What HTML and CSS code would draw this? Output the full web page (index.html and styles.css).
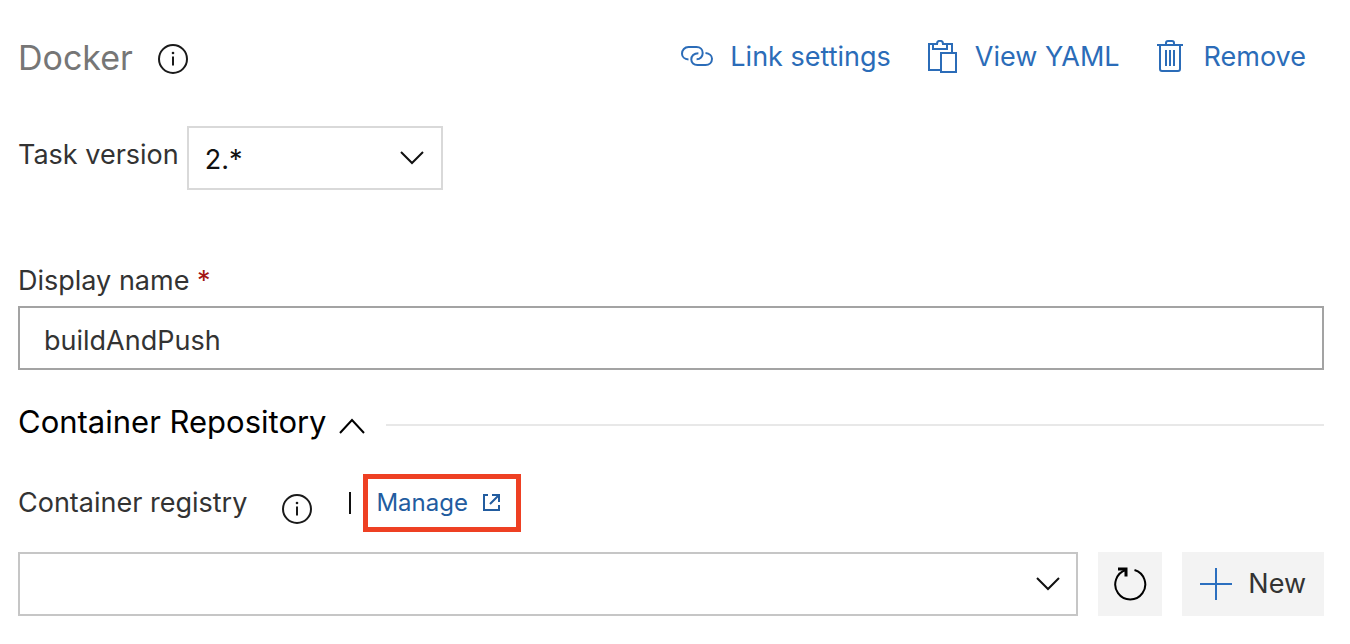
FILE: index.html
```html
<!DOCTYPE html>
<html lang="en">
<head>
<meta charset="utf-8">
<title>Docker task</title>
<link rel="stylesheet" href="styles.css">
</head>
<body>
<main class="panel">
  <header class="header">
    <h1 class="title">Docker</h1>
    <button class="info" type="button" aria-label="About Docker">
      <svg width="32" height="32" viewBox="0 0 32 32"><circle cx="16" cy="16" r="14"/><path d="M16 13.500V22.500"/><circle class="dot" cx="16" cy="10" r="1.300"/></svg>
    </button>
    <nav class="actions">
      <a class="action" href="#link"><svg width="34" height="24" viewBox="0 3 34 24"><path d="M8.500 17.500C4.500 17.200 2 14.700 2 11.700C2 8 4.700 5 8.500 5H16.500C20.200 5 22.700 7.600 22.700 11C22.700 14.500 20.200 17.300 16.600 17.300"/><path d="M25.500 11C29.500 11.300 32 13.800 32 16.800C32 20.500 29.300 23 25.500 23H17.500C13.800 23 11.300 20.900 11.300 17.500C11.300 14 13.800 11.200 18.400 11.200"/></svg>Link settings</a>
      <a class="action" href="#yaml"><svg width="32" height="34" viewBox="0 1 32 34"><path d="M14 31H2V5H6M20 5H25V13M6 5H10C10 0.800 16 0.800 16 5H20V10H6ZM14 14H29V33H14Z"/></svg>View YAML</a>
      <a class="action action-remove" href="#remove"><svg width="28" height="34" viewBox="0 1 28 34"><path d="M1 6H27M4 6V30Q4 32 6 32H22Q24 32 24 30V6M10 6V4Q10 2 12 2H16Q18 2 18 4V6M10 11V27M14 11V27M18 11V27"/></svg>Remove</a>
    </nav>
  </header>

  <div class="version">
    <label class="label" for="version">Task version</label>
    <div class="select version-select">
      <select id="version"><option>2.*</option></select>
      <svg class="chevron" width="26" height="16" viewBox="0 0 26 16"><path d="M2 2L13 13L24 2"/></svg>
    </div>
  </div>

  <div class="field">
    <label class="label" for="name">Display name <span class="required">*</span></label>
    <input class="text" id="name" type="text" value="buildAndPush">
  </div>

  <section>
    <h2 class="section-title">
      <button class="toggle" type="button" aria-expanded="true">Container Repository
        <svg width="28" height="18" viewBox="0 0 28 18"><path d="M2 16L14 3L26 16"/></svg>
      </button>
    </h2>
    <div class="registry-head">
      <label class="label" for="registry">Container registry</label>
      <button class="info" type="button" aria-label="About container registry">
        <svg width="32" height="32" viewBox="0 0 32 32"><circle cx="16" cy="16" r="14"/><path d="M16 13.500V22.500"/><circle class="dot" cx="16" cy="10" r="1.300"/></svg>
      </button>
      <span class="divider"></span>
      <a class="manage" href="#manage">Manage<svg width="20" height="20" viewBox="0 0 20 20"><path d="M6 2H2V17H17V12M10 2H17V9M17 2L8 11"/></svg></a>
    </div>
    <div class="registry-row">
      <div class="select registry-select">
        <select id="registry"><option></option></select>
        <svg class="chevron" width="26" height="16" viewBox="0 0 26 16"><path d="M2 2L13 13L24 2"/></svg>
      </div>
      <button class="button refresh" type="button" aria-label="Refresh">
        <svg width="36" height="36" viewBox="0 0 36 36"><path d="M22.500 4A15 15 0 1 1 14 4"/><path class="arrow" d="M6 3H14V10.500"/></svg>
      </button>
      <button class="button new" type="button">
        <svg width="32" height="32" viewBox="0 0 32 32"><path d="M16 0V32M0 16H32"/></svg>New
      </button>
    </div>
  </section>
</main>
</body>
</html>
```
FILE: styles.css
```css
* { box-sizing: border-box; }
body {
  margin: 0;
  background: #fff;
  color: #333;
  font: 27px/36px Inter, "Liberation Sans", sans-serif;
}
button, input, select { font: inherit; color: inherit; }
button { border: 0; padding: 0; background: none; }
svg { flex: none; fill: none; stroke: currentColor; stroke-width: 2; }
a { color: #2b6cb8; text-decoration: none; }

.panel { padding: 26px 26px 28px 18px; }
.header { display: flex; align-items: center; height: 64px; margin-bottom: 36px; }
.title { margin: 0; font-size: 34px; font-weight: 400; color: #767676; }
.info { display: flex; color: #1a1a1a; }
.header .info { margin-left: 24px; padding-top: 2px; }
.dot { fill: currentColor; stroke: none; }
.actions { display: flex; gap: 36px; margin-left: auto; padding: 0 18px 3px 0; }
.action { display: flex; align-items: center; gap: 16px; }
.action-remove { gap: 20px; }

.version { display: flex; align-items: center; gap: 8px; }
.select { position: relative; }
.select select {
  width: 100%;
  height: 64px;
  padding: 4px 16px 0;
  border: 2px solid #d9d9d9;
  border-radius: 0;
  background: #fff;
  appearance: none;
}
.version .label { padding-bottom: 6px; }
.version-select { width: 256px; color: #111; }
.chevron {
  position: absolute;
  top: 24px;
  right: 18px;
  color: #111;
  pointer-events: none;
}

.field { display: grid; gap: 7px; margin-top: 73px; }
.required { color: #a31515; }
.text {
  width: 100%;
  height: 64px;
  padding: 4px 24px 0;
  border: 2px solid #a3a3a3;
  border-radius: 0;
}

.section-title {
  display: flex;
  align-items: center;
  gap: 20px;
  margin: 32px 0;
  font-size: 31px;
  line-height: 40px;
  font-weight: 400;
  color: #000;
}
.section-title::after { content: ""; flex: 1; height: 2px; margin-top: 6px; background: #e8e8e8; }
.toggle { display: flex; align-items: center; gap: 11px; }
.toggle svg { margin-top: 8px; }

.registry-head { display: flex; align-items: center; margin-bottom: 20px; }
.registry-head .info { margin-left: 34px; padding-top: 12px; }
.divider { width: 2px; height: 22px; margin: 0 12px 0 36px; background: #111; }
.manage {
  display: flex;
  align-items: center;
  gap: 14px;
  height: 58px;
  padding: 0 14px 0 8px;
  border: 5px solid #ee4023;
  color: #225c9f;
  font-size: 24px;
}
.registry-row { display: flex; gap: 20px; }
.registry-select { flex: 1; }
.registry-select select { border-color: #c6c6c6; }
.registry-select .chevron { right: 17px; }
.button { display: flex; align-items: center; justify-content: center; height: 64px; background: #f3f3f3; }
.refresh { width: 64px; color: #000; }
.arrow { stroke-width: 3; }
.new { gap: 16px; padding: 0 18px; }
.new svg { color: #2b6fbf; }
```
